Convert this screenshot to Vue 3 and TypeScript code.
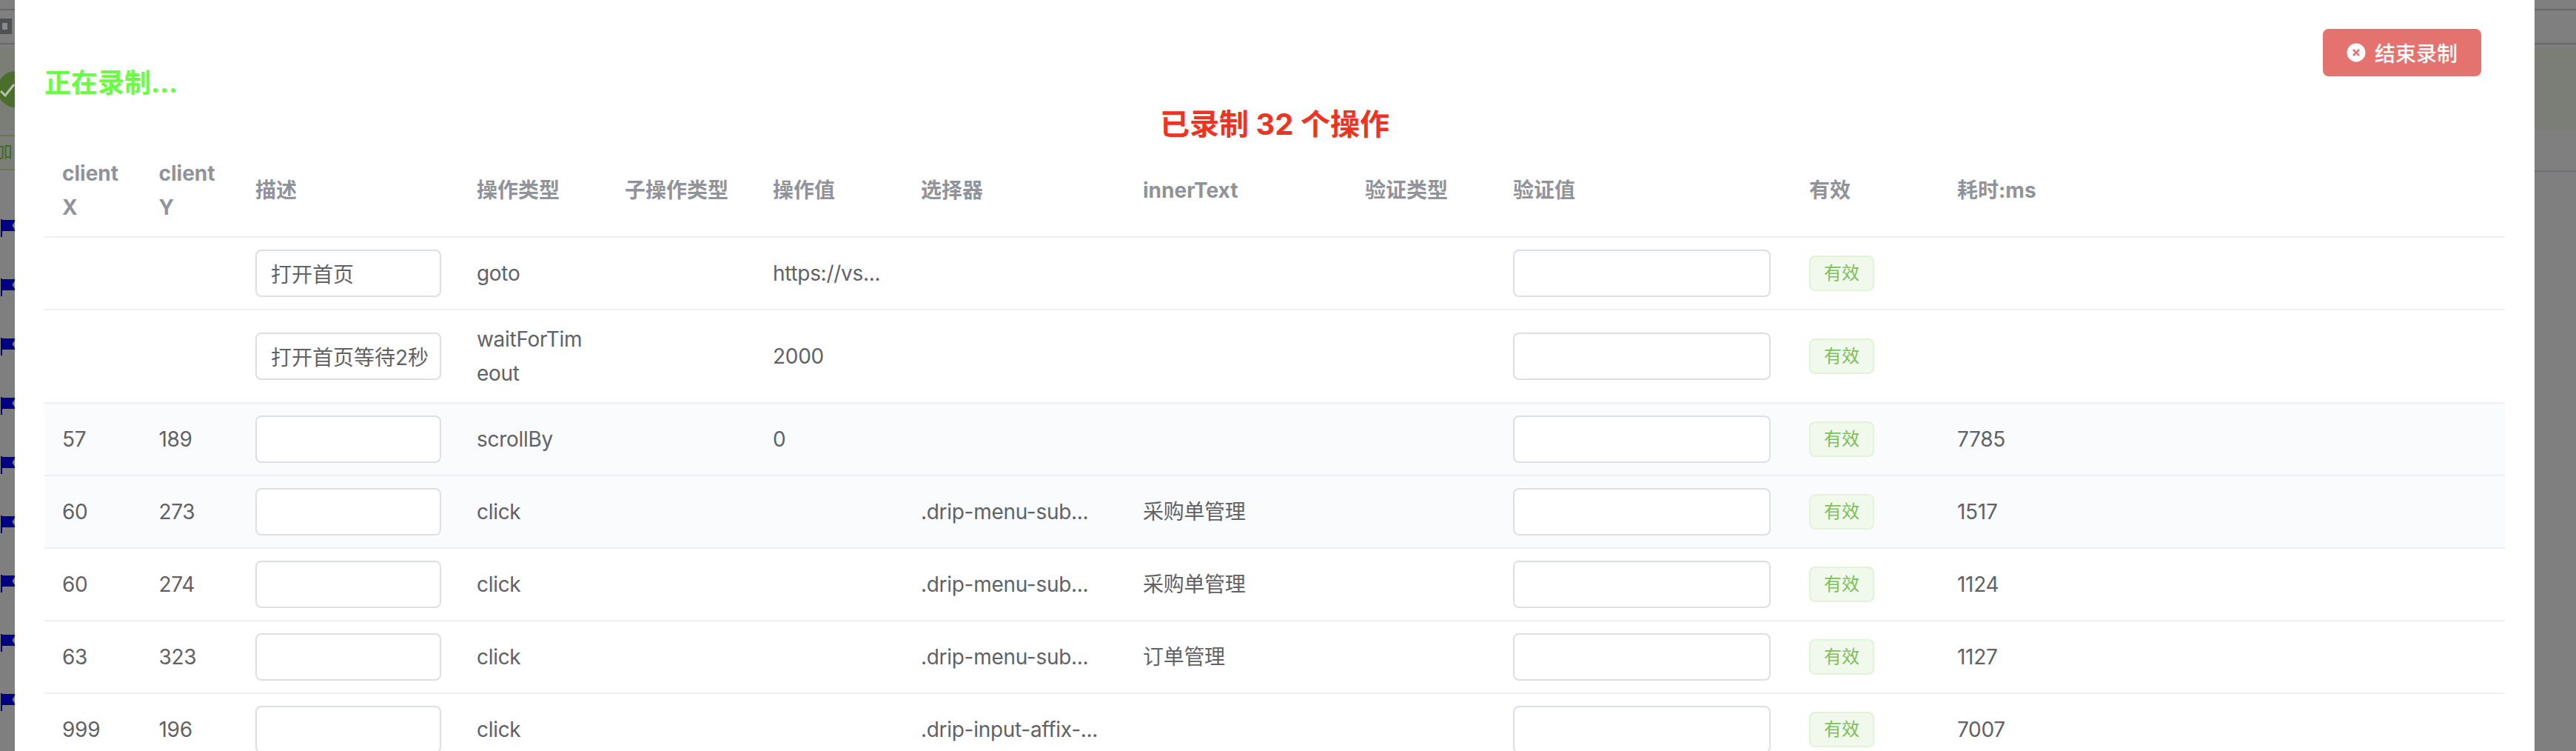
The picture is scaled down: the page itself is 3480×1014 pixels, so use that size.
<script setup lang="ts">
interface Row {
  x: string
  y: string
  desc: string
  type: string
  value: string
  selector: string
  text: string
  ms: string
  active?: boolean
}

const heads: string[] = ['client X', 'client Y', '描述', '操作类型', '子操作类型', '操作值', '选择器', 'innerText', '验证类型', '验证值', '有效', '耗时:ms']
const widths: number[] = [130.5, 130.5, 299, 200, 200, 200, 300, 300, 200, 400, 200, 764]

const rows: Row[] = [
  { x: '', y: '', desc: '打开首页', type: 'goto', value: 'https://vs...', selector: '', text: '', ms: '' },
  { x: '', y: '', desc: '打开首页等待2秒', type: 'waitForTimeout', value: '2000', selector: '', text: '', ms: '' },
  { x: '57', y: '189', desc: '', type: 'scrollBy', value: '0', selector: '', text: '', ms: '7785', active: true },
  { x: '60', y: '273', desc: '', type: 'click', value: '', selector: '.drip-menu-sub...', text: '采购单管理', ms: '1517', active: true },
  { x: '60', y: '274', desc: '', type: 'click', value: '', selector: '.drip-menu-sub...', text: '采购单管理', ms: '1124' },
  { x: '63', y: '323', desc: '', type: 'click', value: '', selector: '.drip-menu-sub...', text: '订单管理', ms: '1127' },
  { x: '999', y: '196', desc: '', type: 'click', value: '', selector: '.drip-input-affix-...', text: '', ms: '7007' }
]

const flags: number[] = [1, 2, 3, 4, 5, 6, 7, 8, 9]
</script>

<template>
  <div class="root">
    <div class="backdrop">
      <div class="rule rule-a"></div>
      <div class="glyph"><span class="glyph-in"></span></div>
      <div class="rule rule-b"></div>
      <div class="band">
        <svg class="check" width="49" height="49" viewBox="0 0 49 49">
          <circle cx="21" cy="24.5" r="24.5" fill="#4a6f2a" />
          <path d="M1 27l6 6L19 18" fill="none" stroke="#b9c0b0" stroke-width="3" />
        </svg>
      </div>
      <div class="add">加</div>
      <div class="rule rule-c"></div>
      <div class="flags">
        <svg v-for="f in flags" :key="f" class="flag" width="20" height="24" viewBox="0 0 20 24">
          <path d="M1 0h2v1h17v2l-3.500 5.500L20 14v2H3v8H1z" fill="#000080" />
        </svg>
      </div>
    </div>

    <section class="modal">
      <div class="top">
        <div class="status">正在录制...</div>
        <button class="stop" type="button">
          <svg width="26" height="26" viewBox="0 0 26 26">
            <circle cx="13" cy="13" r="12.500" fill="#fff" />
            <path d="M9 9l8 8M17 9l-8 8" stroke="#e4736f" stroke-width="2.500" fill="none" />
          </svg>
          <span>结束录制</span>
        </button>
      </div>
      <h2 class="title">已录制 32 个操作</h2>

      <table class="grid">
        <colgroup>
          <col v-for="(w, i) in widths" :key="i" :style="{ width: w + 'px' }" />
        </colgroup>
        <thead>
          <tr>
            <th v-for="h in heads" :key="h">{{ h }}</th>
          </tr>
        </thead>
        <tbody>
          <tr v-for="(r, i) in rows" :key="i" :class="{ active: r.active }">
            <td>{{ r.x }}</td>
            <td>{{ r.y }}</td>
            <td><input class="field" type="text" :value="r.desc" /></td>
            <td class="wrap">{{ r.type }}</td>
            <td></td>
            <td>{{ r.value }}</td>
            <td>{{ r.selector }}</td>
            <td>{{ r.text }}</td>
            <td></td>
            <td><input class="field check-field" type="text" /></td>
            <td><span class="tag">有效</span></td>
            <td>{{ r.ms }}</td>
          </tr>
        </tbody>
      </table>
    </section>
  </div>
</template>

<style scoped>
.root {
  position: relative;
  height: 1014px;
  overflow: hidden;
  background: #7f7f7f;
  font-family: Inter, "Noto Sans CJK SC", sans-serif;
  color: #606266;
}
.backdrop {
  position: absolute;
  inset: 0;
  display: flex;
  flex-direction: column;
}
.rule {
  height: 2px;
  background: #666769;
  flex: none;
}
.rule-a {
  margin-top: 12px;
}
.glyph {
  margin-top: 11px;
  width: 16px;
  height: 21px;
  border: 3px solid #4f5054;
  border-left: 0;
  box-sizing: border-box;
  display: flex;
  align-items: center;
  justify-content: center;
}
.glyph-in {
  width: 9px;
  height: 9px;
  border: 3px solid #4f5054;
  background: #8a8a8a;
}
.rule-b {
  margin-top: 12px;
}
.rule-c {
  width: 56px;
  margin-left: auto;
  background: #6e6e73;
}
.band {
  margin-top: 5px;
  height: 111px;
  background: #7b7d77;
  display: flex;
  align-items: flex-start;
}
.check {
  margin-top: 31px;
  flex: none;
}
.add {
  margin-top: 6px;
  width: 20px;
  height: 48px;
  box-sizing: border-box;
  border-top: 2px solid #66794e;
  border-bottom: 2px solid #66794e;
  background: #7c7f77;
  color: #3f6a1d;
  font-size: 24px;
  line-height: 42px;
  text-indent: -7px;
}
.flags {
  margin-top: 64px;
  display: flex;
  flex-direction: column;
  gap: 56px;
}
.flag {
  display: block;
  flex: none;
}
.modal {
  position: relative;
  margin: -2px 56px 0 20px;
  padding: 0 40px;
  height: 1100px;
  background: #fff;
  border-radius: 4px;
}
.top {
  display: flex;
  justify-content: space-between;
  align-items: flex-start;
  height: 143px;
  padding: 41px 32px 0 0;
  box-sizing: border-box;
}
.status {
  margin-top: 48px;
  font-size: 36px;
  line-height: 50px;
  font-weight: 700;
  color: #67ff3f;
}
.stop {
  width: 214px;
  height: 64px;
  display: flex;
  align-items: center;
  justify-content: center;
  gap: 12px;
  padding: 0;
  border: 0;
  border-radius: 8px;
  background: #e4736f;
  color: #fff;
  font-family: inherit;
  font-size: 28px;
  font-weight: 500;
}
.title {
  margin: 0;
  height: 54px;
  box-sizing: border-box;
  padding-top: 2px;
  font-size: 40px;
  line-height: 50px;
  font-weight: 700;
  color: #ee3322;
  text-align: center;
}
.grid {
  width: 3324px;
  table-layout: fixed;
  border-collapse: separate;
  border-spacing: 0;
  font-size: 28px;
  line-height: 46px;
}
th,
td {
  padding: 16px 24px;
  border-bottom: 2px solid #ebeef5;
  text-align: left;
  vertical-align: middle;
  word-break: break-all;
  box-sizing: border-box;
}
th {
  color: #909399;
  font-weight: 700;
}
td {
  letter-spacing: -0.3px;
}
tr.active td {
  background: #fafbfd;
}
.field {
  display: block;
  width: 100%;
  height: 64px;
  box-sizing: border-box;
  padding: 0 12px 0 19px;
  border: 2px solid #dcdfe6;
  border-radius: 8px;
  background: #fff;
  color: #606266;
  font-family: inherit;
  font-size: 28px;
  outline: none;
}
.check-field {
  width: 348px;
}
.tag {
  display: block;
  width: 88px;
  height: 48px;
  box-sizing: border-box;
  border: 2px solid #e1f3d8;
  border-radius: 8px;
  background: #f0f9eb;
  color: #7bc155;
  font-size: 24px;
  line-height: 44px;
  text-align: center;
  letter-spacing: 0;
}
</style>

<style>
html,
body {
  margin: 0;
  overflow: hidden;
}
</style>
